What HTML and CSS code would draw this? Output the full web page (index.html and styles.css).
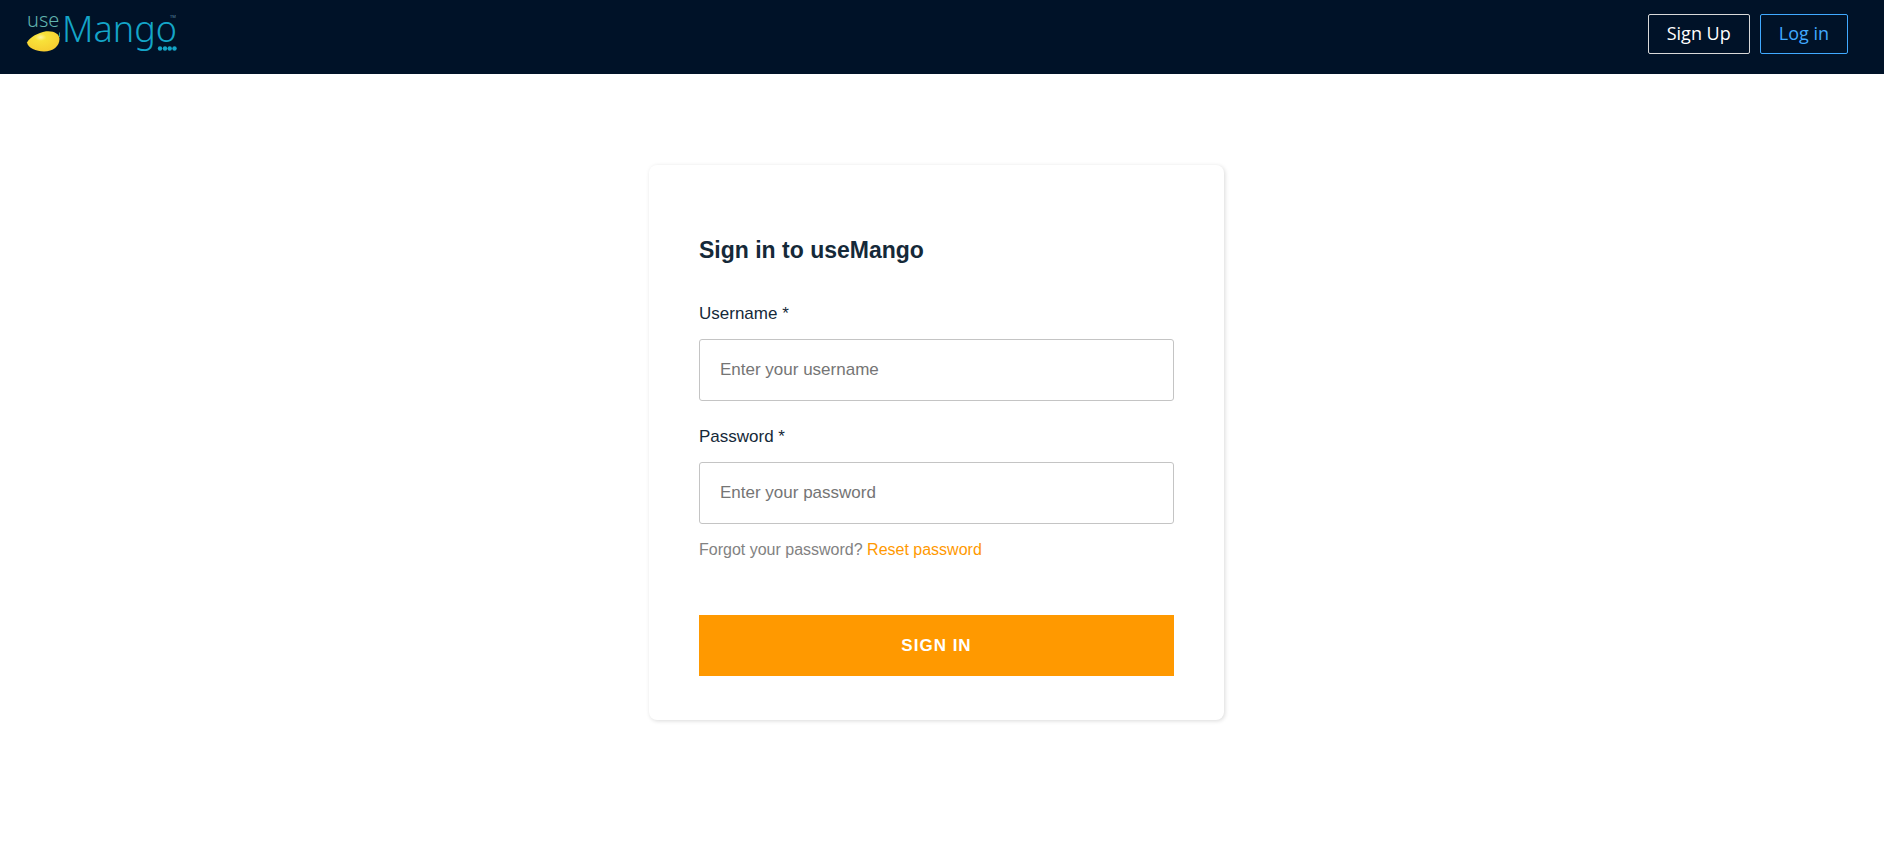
FILE: index.html
```html
<!DOCTYPE html>
<html lang="en">
<head>
<meta charset="utf-8">
<meta name="viewport" content="width=device-width, initial-scale=1">
<title>useMango</title>
<link rel="stylesheet" href="styles.css">
</head>
<body>
<header class="topbar">
  <a class="brand" href="#" aria-label="useMango home">
    <svg width="170" height="64" viewBox="0 -8 170 64">
      <defs>
        <radialGradient id="skin" cx="0.42" cy="0.3" r="0.7">
          <stop offset="0" stop-color="#fff3a0"/>
          <stop offset="0.25" stop-color="#f8e23a"/>
          <stop offset="1" stop-color="#f6cd30"/>
        </radialGradient>
      </defs>
      <text class="logo-use" x="1" y="19">use</text>
      <path d="M1 34.500C3 30 12 24.500 20 23.300C28 22.500 33.500 26 33.500 31C33.500 38 27 43.500 18 43.500C10 43.500 2 40 1 34.500Z" fill="url(#skin)"/>
      <path d="M33.500 24.500V29" stroke="#2b9a93" fill="none"/>
      <text class="logo-mango" x="36" y="34">Mango</text>
      <text class="logo-tm" x="144" y="10">TM</text>
      <g fill="#14a5c8">
        <circle cx="134" cy="40.500" r="2.200"/><circle cx="139" cy="40.500" r="2.200"/><circle cx="143.700" cy="40.500" r="2.200"/><circle cx="148.500" cy="40.500" r="2.200"/>
      </g>
    </svg>
  </a>
  <nav class="actions">
    <button class="nav-btn" type="button">Sign Up</button>
    <button class="nav-btn nav-btn-login" type="button">Log in</button>
  </nav>
</header>
<main class="page">
  <form class="card">
    <h1 class="title">Sign in to useMango</h1>
    <label class="label" for="username">Username *</label>
    <input class="field" id="username" type="text" placeholder="Enter your username">
    <label class="label" for="password">Password *</label>
    <input class="field" id="password" type="password" placeholder="Enter your password">
    <p class="hint">Forgot your password? <a class="reset" href="#">Reset password</a></p>
    <button class="submit" type="submit">SIGN IN</button>
  </form>
</main>
</body>
</html>
```
FILE: styles.css
```css
* { box-sizing: border-box; }
body {
  margin: 0;
  background: #fff;
  color: #152939;
  font-family: "Liberation Sans", Arial, sans-serif;
}
.topbar {
  display: flex;
  justify-content: space-between;
  align-items: flex-start;
  min-height: 74px;
  padding: 0 36px 0 26px;
  background: #001228;
}
.brand svg { display: block; overflow: visible; }
.logo-use { font: 300 20px "Noto Sans", sans-serif; fill: #62b5b0; }
.logo-mango { font: 300 36px "Noto Sans", sans-serif; fill: #14a5c8; }
.logo-tm { font: 400 4px "Noto Sans", sans-serif; fill: #5b8aa5; }
.actions { display: flex; gap: 10px; padding-top: 14px; }
.nav-btn {
  height: 40px;
  padding: 0 18px 2px;
  border: 1px solid #d9d9d9;
  border-radius: 2px;
  background: transparent;
  color: #fff;
  font: 18px "Open Sans", sans-serif;
}
.nav-btn-login { border-color: #40a9ff; color: #40a9ff; }
.page {
  display: flex;
  justify-content: center;
  padding: 91px 11px 40px 0;
}
.card {
  width: 100%;
  max-width: 575px;
  padding: 70px 50px 44px;
  border-radius: 8px;
  background: #fff;
  box-shadow: 1px 1px 4px rgba(0, 0, 0, 0.15);
}
.title {
  margin: 0 0 36px;
  font-size: 23px;
  line-height: 30px;
}
.label {
  display: block;
  margin-bottom: 12px;
  font-size: 17px;
  line-height: 26px;
}
.field {
  display: block;
  width: 100%;
  height: 62px;
  margin-bottom: 23px;
  padding: 0 20px;
  border: 1px solid #c4c4c4;
  border-radius: 3px;
  background: #fff;
  color: #152939;
  font: 17px "Liberation Sans", Arial, sans-serif;
}
.field::placeholder { color: #757575; opacity: 1; }
.hint {
  margin: -9px 0 53px;
  color: #828282;
  font-size: 16px;
  line-height: 24px;
}
.reset { color: #f90; text-decoration: none; }
.submit {
  display: block;
  width: 100%;
  height: 61px;
  border: 0;
  background: #f90;
  color: #fff;
  font: bold 17px "Liberation Sans", Arial, sans-serif;
  letter-spacing: 1px;
}
```
